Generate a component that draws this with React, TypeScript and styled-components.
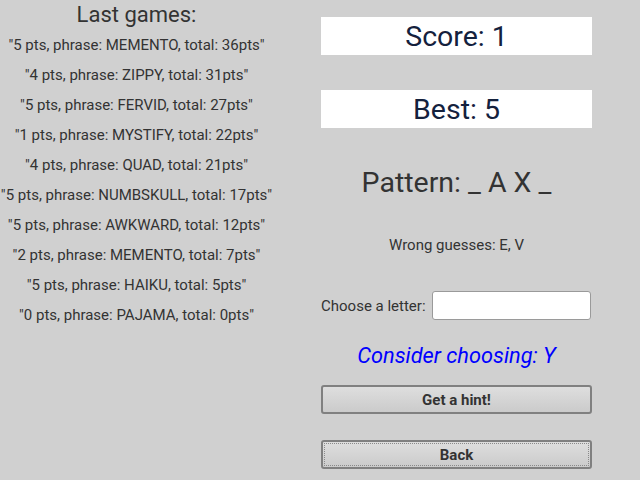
import React from "react";
import styled, { createGlobalStyle } from "styled-components";

const Global = createGlobalStyle`
  html, body { margin: 0; padding: 0; background: #d0d0d0; }
  body { font-family: Roboto, "Liberation Sans", sans-serif; color: #333; }
`;

const Page = styled.div`
  display: grid;
  grid-template-columns: 273px 271px;
  column-gap: 48px;
  width: 640px;
  height: 480px;
  box-sizing: border-box;
`;

const LeftColumn = styled.section`
  display: flex;
  flex-direction: column;
  align-items: center;
  padding-top: 2px;
`;

const Title = styled.h2`
  margin: 0 0 2px;
  font-size: 22px;
  font-weight: 400;
  line-height: 26px;
  color: #333;
`;

const GameRow = styled.p`
  margin: 6px 0;
  font-size: 15px;
  line-height: 18px;
  white-space: nowrap;
  color: #333;
`;

const RightColumn = styled.section`
  display: flex;
  flex-direction: column;
  align-items: stretch;
  padding-top: 17px;
`;

const StatBox = styled.div<{ $gap: number }>`
  box-sizing: border-box;
  background: #fff;
  height: 38px;
  padding-top: 1px;
  line-height: 38px;
  text-align: center;
  font-size: 28.5px;
  color: #14213d;
  margin-bottom: ${(p) => p.$gap}px;
`;

const Pattern = styled.div`
  height: 40px;
  line-height: 40px;
  text-align: center;
  font-size: 28.5px;
  color: #333;
`;

const Wrong = styled.div`
  margin-top: 33px;
  height: 18px;
  line-height: 18px;
  text-align: center;
  font-size: 15px;
  color: #333;
`;

const ChooseRow = styled.label`
  display: flex;
  align-items: center;
  gap: 6px;
  margin-top: 37px;
  font-size: 15px;
  color: #333;
`;

const LetterInput = styled.input`
  box-sizing: border-box;
  width: 159px;
  height: 29px;
  border: 1px solid #9a9a9a;
  border-radius: 3px;
  background: #fff;
  font-family: inherit;
  font-size: 15px;
  outline: none;
`;

const Hint = styled.div`
  margin-top: 22px;
  height: 28px;
  line-height: 28px;
  text-align: center;
  font-size: 21.75px;
  font-style: italic;
  color: #0000ff;
`;

const ActionButton = styled.button<{ $focused?: boolean; $gap: number }>`
  box-sizing: border-box;
  margin-top: ${(p) => p.$gap}px;
  width: 271px;
  height: 29px;
  border: 2px solid #808080;
  border-radius: 3px;
  background: linear-gradient(#dedede, #cbcbcb);
  font-family: Roboto, "Liberation Sans", sans-serif;
  font-weight: 700;
  font-size: 15px;
  color: #333;
  padding: 0;
  outline: ${(p) => (p.$focused ? "1px dotted #8a8a8a" : "none")};
  outline-offset: -4px;
`;

const games = [
  "5 pts, phrase: MEMENTO, total: 36pts",
  "4 pts, phrase: ZIPPY, total: 31pts",
  "5 pts, phrase: FERVID, total: 27pts",
  "1 pts, phrase: MYSTIFY, total: 22pts",
  "4 pts, phrase: QUAD, total: 21pts",
  "5 pts, phrase: NUMBSKULL, total: 17pts",
  "5 pts, phrase: AWKWARD, total: 12pts",
  "2 pts, phrase: MEMENTO, total: 7pts",
  "5 pts, phrase: HAIKU, total: 5pts",
  "0 pts, phrase: PAJAMA, total: 0pts",
];

export default function App() {
  return (
    <>
      <Global />
      <Page>
        <LeftColumn>
          <Title>Last games:</Title>
          {games.map((g, i) => (
            <GameRow key={i}>"{g}"</GameRow>
          ))}
        </LeftColumn>
        <RightColumn>
          <StatBox $gap={35}>Score: 1</StatBox>
          <StatBox $gap={35}>Best: 5</StatBox>
          <Pattern>Pattern: _ A X _</Pattern>
          <Wrong>Wrong guesses: E, V</Wrong>
          <ChooseRow>
            Choose a letter:
            <LetterInput type="text" />
          </ChooseRow>
          <Hint>Consider choosing: Y</Hint>
          <ActionButton $gap={15}>Get a hint!</ActionButton>
          <ActionButton $gap={26} $focused>
            Back
          </ActionButton>
        </RightColumn>
      </Page>
    </>
  );
}
